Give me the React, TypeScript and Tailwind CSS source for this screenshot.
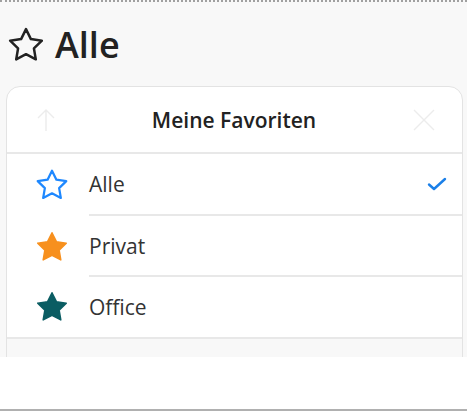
import React from "react";

const STAR = "M12 2.5l2.94 5.96 6.58.96-4.76 4.64 1.12 6.55L12 17.52l-5.88 3.09 1.12-6.55L2.48 9.42l6.58-.96L12 2.5z";

function Star({ fill, stroke, size, sw }: { fill: string; stroke: string; size: number; sw: number }) {
  return (
    <svg width={size} height={size} viewBox="0 0 24 24">
      <path d={STAR} fill={fill} stroke={stroke} strokeWidth={sw} strokeLinejoin="round" />
    </svg>
  );
}

function Row({ icon, label, check, h }: { icon: React.ReactNode; label: string; check?: boolean; h: string }) {
  return (
    <div className={"flex items-stretch " + h}>
      <div className="flex w-[82px] shrink-0 items-center pl-[27px]">{icon}</div>
      <div className="flex flex-1 items-center justify-between border-b-2 border-[#e8e8e8] pr-[15px]">
        <span className="pt-[2px] text-[21px] text-[#333333]">{label}</span>
        {check && (
          <svg width="20" height="14" viewBox="0 0 20 14">
            <path d="M2 7.5l5 4.5L18 2" fill="none" stroke="#1a7fe8" strokeWidth="2.4" strokeLinecap="round" strokeLinejoin="round" />
          </svg>
        )}
      </div>
    </div>
  );
}

export default function App() {
  return (
    <div className="relative h-[413px] w-[467px] bg-white" style={{ fontFamily: '"Open Sans", "Noto Sans", sans-serif' }}>
      <div className="h-[357px] overflow-hidden border-t-2 border-dotted border-[#a0a0a0] bg-[#f8f8f8]">
        <div className="flex h-[84px] items-center pl-[6px] pt-[1px]">
          <Star fill="none" stroke="#222222" size={40} sw={1.5} />
          <span className="ml-[9px] text-[36px] font-semibold leading-none text-[#222222]">Alle</span>
        </div>
        <div className="ml-[6px] mr-[4px] rounded-[14px] border border-[#e3e3e3] bg-white">
          <div className="flex h-[67px] items-center justify-between border-b-2 border-[#e8e8e8] pl-[30px] pr-[27px]">
            <svg width="18" height="24" viewBox="0 0 18 24">
              <path d="M9 23V2M1 10l8-8 8 8" fill="none" stroke="#ececec" strokeWidth="1.4" />
            </svg>
            <span className="pt-[3px] text-[21px] font-semibold text-[#222222]">Meine Favoriten</span>
            <svg width="22" height="22" viewBox="0 0 22 22">
              <path d="M1 1l20 20M21 1L1 21" fill="none" stroke="#ececec" strokeWidth="1.4" />
            </svg>
          </div>
          <Row h="h-[62px]" icon={<Star fill="none" stroke="#1e88ff" size={36} sw={1.5} />} label="Alle" check />
          <Row h="h-[61px]" icon={<Star fill="#f7901e" stroke="#f7901e" size={36} sw={1} />} label="Privat" />
          <div className="flex h-[62px] items-center border-b-2 border-[#e8e8e8]">
            <div className="flex w-[82px] shrink-0 items-center pl-[27px]">
              <Star fill="#0b5d63" stroke="#0b5d63" size={36} sw={1} />
            </div>
            <span className="pt-[2px] text-[21px] text-[#333333]">Office</span>
          </div>
          <div className="h-[40px] bg-[#f8f8f8]" />
        </div>
      </div>
      <div className="h-[54px] border-b-2 border-[#b0b0b0]" />
    </div>
  );
}
